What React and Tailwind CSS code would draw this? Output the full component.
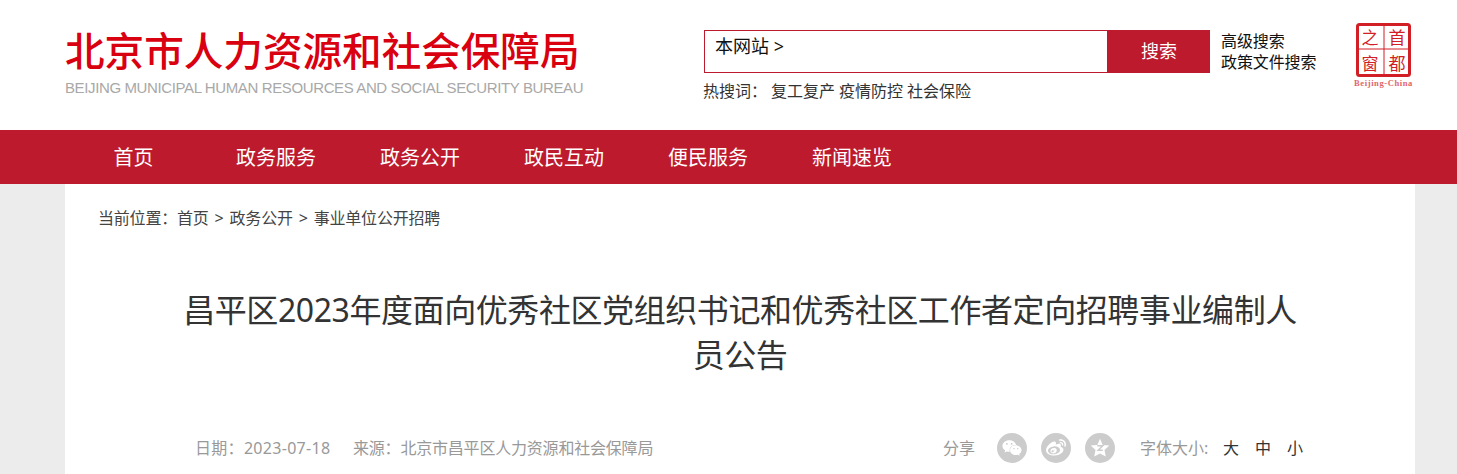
import { FaWeixin, FaWeibo } from "react-icons/fa";

const navItems = ["政务服务", "政务公开", "政民互动", "便民服务", "新闻速览"];

function StampLogo() {
  return (
    <svg width="66" height="68" viewBox="0 0 66 68" className="block">
      <rect x="5.500" y="2.500" width="52" height="51" rx="2" fill="none" stroke="#d21f26" strokeWidth="3" />
      <path d="M32 3v50M6 27h51" stroke="#d21f26" strokeWidth="1" />
      <g fill="#d21f26" fontFamily="'Noto Sans CJK SC', sans-serif" fontSize="17" textAnchor="middle">
        <text x="18" y="22">之</text>
        <text x="45" y="22">首</text>
        <text x="18" y="48">窗</text>
        <text x="45" y="48">都</text>
      </g>
      <text x="31.500" y="64" fill="#e2646a" fontFamily="'Liberation Serif', serif" fontWeight="700" fontSize="8.500" letterSpacing="0.6" textAnchor="middle">
        Beijing-China
      </text>
    </svg>
  );
}

function ShareIcon({ children }) {
  return (
    <span className="flex h-[30px] w-[30px] items-center justify-center rounded-full bg-[#cccccc] text-white">
      {children}
    </span>
  );
}

function StarIcon() {
  return (
    <svg width="22" height="22" viewBox="0 0 24 24">
      <path d="M12 2l3 6.600 7.200.8-5.300 4.900 1.400 7.100L12 17.900l-6.300 3.500 1.400-7.100L1.800 9.400 9 8.600z" fill="#fff" />
      <path d="M9 9.500h6l-5 5h5" fill="none" stroke="#cccccc" strokeWidth="1.600" />
    </svg>
  );
}

export default function App() {
  return (
    <div className="h-[474px] overflow-hidden bg-[#ececec] font-['Noto_Sans','Noto_Sans_CJK_SC',sans-serif]">
      <header className="flex h-[130px] bg-white">
        <div className="ml-[65px] w-[639px] pt-[27px]">
          <div className="text-[39.600px] leading-[48px] font-medium whitespace-nowrap text-[#d9000f]">
            北京市人力资源和社会保障局
          </div>
          <div className="mt-[3px] font-['Liberation_Sans',sans-serif] text-[15px] leading-[20px] tracking-[-0.38px] whitespace-nowrap text-[#a8a8a8]">
            BEIJING MUNICIPAL HUMAN RESOURCES AND SOCIAL SECURITY BUREAU
          </div>
        </div>

        <div className="w-[517px] pt-[30px]">
          <div className="flex h-[43px] w-[506px]">
            <div className="flex-1 border border-[#bd1a2d] pl-[10px] text-[18px] leading-[31px] text-[#111111]">
              本网站 &gt;
            </div>
            <button className="w-[102px] bg-[#bd1a2d] text-[18px] text-white">搜索</button>
          </div>
          <div className="mt-[6px] -ml-[1px] flex text-[16px] leading-[24px] whitespace-nowrap text-[#333333]">
            <span className="w-[68px]">热搜词：</span>
            <span className="flex gap-[4px]">
              <span>复工复产</span>
              <span>疫情防控</span>
              <span>社会保险</span>
            </span>
          </div>
        </div>

        <div className="w-[131px] pt-[31px] text-[16px] leading-[21px] tracking-[-0.1px] whitespace-nowrap text-[#111111]">
          <div>高级搜索</div>
          <div>政策文件搜索</div>
        </div>

        <div className="pt-[22px]">
          <StampLogo />
        </div>
      </header>

      <nav className="flex h-[54px] items-center bg-[#bd1a2d] pt-[2px] pl-[63px] text-[20px] whitespace-nowrap text-white">
        <a className="w-[141px] text-center">首页</a>
        {navItems.map((item) => (
          <a key={item} className="w-[144px] text-center">
            {item}
          </a>
        ))}
      </nav>

      <main className="mx-[65px] h-[290px] w-[1350px] bg-white">
        <div className="flex gap-[6px] pt-[22px] pl-[33px] text-[16px] leading-[24px] tracking-[-0.2px] whitespace-nowrap text-[#444444]">
          <span className="-mr-[2px] w-[75px]">当前位置：</span>
          <span>首页</span>
          <span>&gt;</span>
          <span>政务公开</span>
          <span>&gt;</span>
          <span>事业单位公开招聘</span>
        </div>

        <h1 className="mx-auto mt-[57px] w-[1130px] text-center text-[32px] leading-[45px] font-normal tracking-[-0.42px] text-[#333333]">
          昌平区2023年度面向优秀社区党组织书记和优秀社区工作者定向招聘事业编制人员公告
        </h1>

        <div className="mt-[56px] flex items-center pl-[130px] text-[16px] whitespace-nowrap text-[#999999]">
          <span className="w-[158px] tracking-[0.3px]">日期：2023-07-18</span>
          <span className="w-[590px] tracking-[-0.2px]">来源：北京市昌平区人力资源和社会保障局</span>
          <span className="w-[54px]">分享</span>
          <span className="flex gap-[14px]">
            <ShareIcon>
              <FaWeixin size={20} />
            </ShareIcon>
            <ShareIcon>
              <FaWeibo size={20} />
            </ShareIcon>
            <ShareIcon>
              <StarIcon />
            </ShareIcon>
          </span>
          <span className="ml-[25px] w-[83px]">字体大小:</span>
          <span className="flex gap-[16px] text-[#333333]">
            <span>大</span>
            <span>中</span>
            <span>小</span>
          </span>
        </div>
      </main>
    </div>
  );
}
